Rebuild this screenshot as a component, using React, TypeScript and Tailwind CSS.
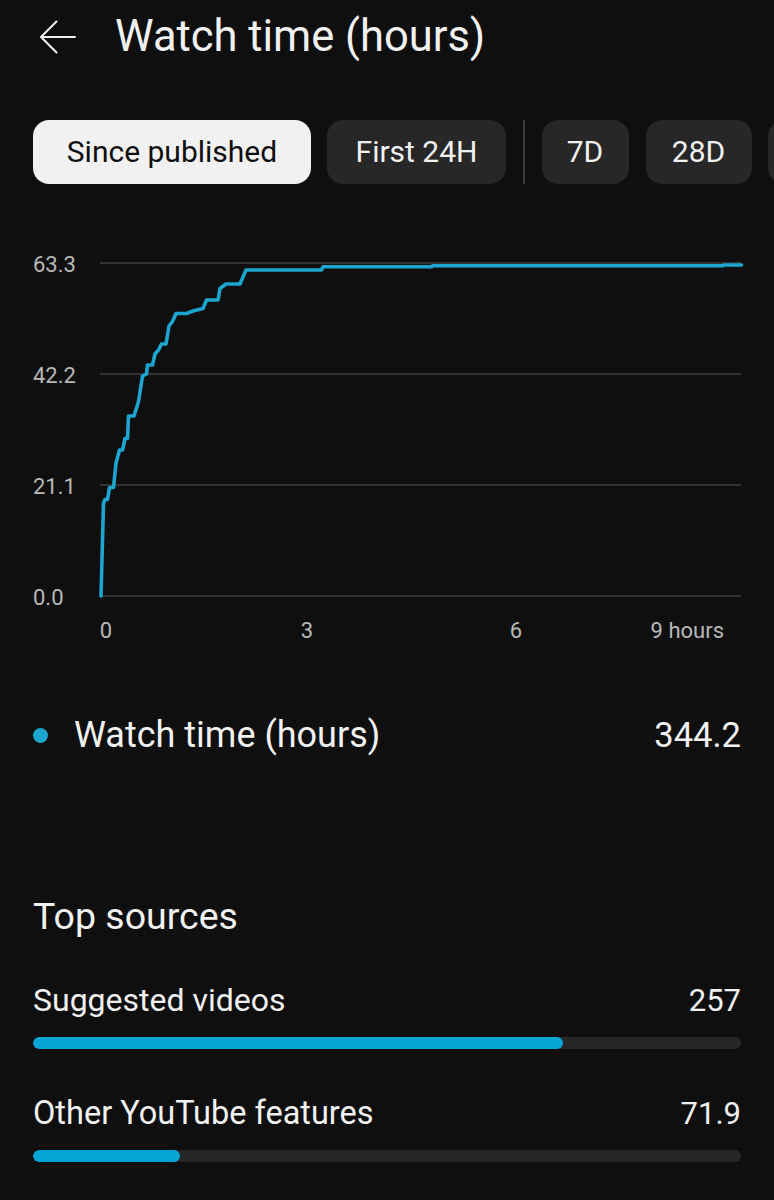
import React from "react";

const pts: [number, number][] = [
  [101, 596],
  [103.5, 503],
  [105, 499.5],
  [107.5, 499.5],
  [109.5, 487.5],
  [113.5, 487.5],
  [116, 463],
  [119.5, 450],
  [122.5, 450],
  [125, 438.5],
  [127.5, 438.5],
  [128.5, 416],
  [134, 416],
  [138.5, 401.5],
  [142.5, 376],
  [146.5, 374],
  [147.5, 365],
  [152.5, 365],
  [155, 354],
  [158.5, 350],
  [161.5, 344],
  [166, 344],
  [169, 326],
  [172.5, 321.5],
  [176, 313.5],
  [186.5, 313.5],
  [193, 311],
  [199, 309.5],
  [203, 308.5],
  [206.5, 300],
  [218, 300],
  [220, 288.5],
  [226, 284],
  [240, 284],
  [246, 270],
  [321.5, 270],
  [323, 266.7],
  [431.5, 266.7],
  [432.5, 265.7],
  [723, 265.7],
  [724, 265],
  [741.5, 265],
];

const OFF = 220;
const pathD = pts
  .map(([x, y], i) => `${i === 0 ? "M" : "L"}${x} ${(y - OFF).toFixed(1)}`)
  .join(" ");

const grid = [
  { y: 263, label: "63.3" },
  { y: 374, label: "42.2" },
  { y: 485, label: "21.1" },
  { y: 596, label: "0.0" },
];

function Chart() {
  return (
    <svg width="774" height="430" viewBox="0 0 774 430" className="block">
      {grid.map((g) => (
        <g key={g.label}>
          <line
            x1="100"
            x2="741"
            y1={g.y - OFF}
            y2={g.y - OFF}
            stroke="#3f3f3f"
            strokeWidth="1.6"
          />
          <text
            x="33"
            y={g.y - OFF + 8.5}
            fill="#b8b8b8"
            fontSize="22"
            fontFamily="Roboto, sans-serif"
          >
            {g.label}
          </text>
        </g>
      ))}
      <path
        d={pathD}
        fill="none"
        stroke="#1ca6cf"
        strokeWidth="3.6"
        strokeLinejoin="round"
        strokeLinecap="round"
      />
      <text x="106" y="418" fill="#b8b8b8" fontSize="22" fontFamily="Roboto, sans-serif" textAnchor="middle">0</text>
      <text x="307" y="418" fill="#b8b8b8" fontSize="22" fontFamily="Roboto, sans-serif" textAnchor="middle">3</text>
      <text x="516" y="418" fill="#b8b8b8" fontSize="22" fontFamily="Roboto, sans-serif" textAnchor="middle">6</text>
      <text x="724" y="418" fill="#b8b8b8" fontSize="22" fontFamily="Roboto, sans-serif" textAnchor="end">9 hours</text>
    </svg>
  );
}

function Chip({ label, selected, w }: { label: string; selected?: boolean; w: string }) {
  return (
    <div
      className={
        "shrink-0 h-[64px] rounded-[16px] flex items-center justify-center text-[30px] leading-none " +
        w +
        (selected ? " bg-[#f1f1f1] text-[#0f0f0f]" : " bg-[#272727] text-[#f1f1f1]")
      }
    >
      {label}
    </div>
  );
}

export default function App() {
  return (
    <div className="w-[774px] h-[1200px] overflow-hidden bg-[#0f0f0f] text-[#f1f1f1] font-['Roboto',sans-serif]">
      {/* Header */}
      <div className="h-[74px] flex items-center pl-[40px]">
        <svg width="36" height="34" viewBox="0 0 36 34" className="shrink-0">
          <path
            d="M1 17 H35 M1 17 L16.5 1.5 M1 17 L16.5 32.5"
            stroke="#f1f1f1"
            strokeWidth="2"
            fill="none"
            strokeLinecap="round"
          />
        </svg>
        <div className="ml-[39px] text-[43.5px] leading-none whitespace-nowrap">Watch time (hours)</div>
      </div>

      {/* Chips */}
      <div className="mt-[46px] flex items-center pl-[33px] overflow-hidden whitespace-nowrap">
        <Chip label="Since published" selected w="w-[278px]" />
        <div className="ml-[16px]">
          <Chip label="First 24H" w="w-[179px]" />
        </div>
        <div className="shrink-0 ml-[17px] w-[1.5px] h-[64px] bg-[#3a3a3a]" />
        <div className="ml-[17px]">
          <Chip label="7D" w="w-[87px]" />
        </div>
        <div className="ml-[17px]">
          <Chip label="28D" w="w-[106px]" />
        </div>
        <div className="ml-[16px] shrink-0 w-[106px] h-[64px] rounded-[16px] bg-[#272727]" />
      </div>

      {/* Chart */}
      <div className="mt-[36px]">
        <Chart />
      </div>

      {/* Legend */}
      <div className="mt-[60px] h-[50px] flex items-center pl-[33px] pr-[33px]">
        <div className="w-[15px] h-[15px] rounded-full bg-[#1ca6cf] shrink-0" />
        <div className="ml-[26px] text-[36px] leading-none">Watch time (hours)</div>
        <div className="ml-auto text-[34.5px] leading-none">344.2</div>
      </div>

      {/* Top sources */}
      <div className="px-[33px]">
        <div className="mt-[134px] h-[46px] flex items-center text-[37.5px] leading-none">Top sources</div>

        <div className="mt-[40px] h-[40px] flex items-center justify-between text-[32px] leading-none">
          <span>Suggested videos</span>
          <span className="text-[31px]">257</span>
        </div>
        <div className="mt-[17px] h-[12px] rounded-full bg-[#272727] overflow-hidden">
          <div className="h-full w-[530px] rounded-full bg-[#05a6d4]" />
        </div>

        <div className="mt-[44px] h-[40px] flex items-center justify-between text-[32.5px] leading-none">
          <span>Other YouTube features</span>
          <span className="text-[31px]">71.9</span>
        </div>
        <div className="mt-[17px] h-[12px] rounded-full bg-[#272727] overflow-hidden">
          <div className="h-full w-[147px] rounded-full bg-[#05a6d4]" />
        </div>
      </div>
    </div>
  );
}
